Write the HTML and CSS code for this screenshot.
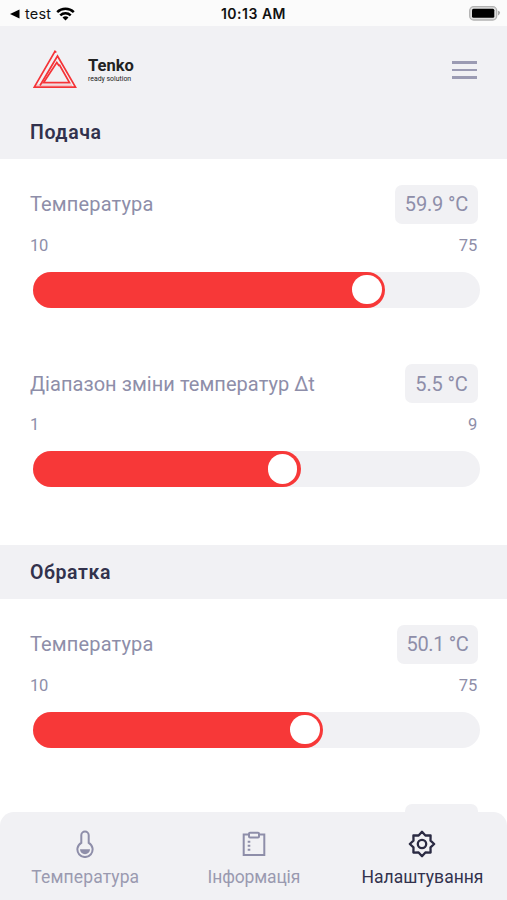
FILE: index.html
```html
<!DOCTYPE html>
<html lang="uk">
<head>
<meta charset="utf-8">
<title>Tenko</title>
<link rel="stylesheet" href="styles.css">
</head>
<body>
<div class="app">
  <div class="status">
    <div class="status-left">
      <svg width="10" height="10" viewBox="0 0 10 10"><path d="M0 5 9.500 .6v8.800z"/></svg>
      <span class="carrier">test</span>
      <svg class="wifi" width="19" height="14" viewBox="0 0 19 14" fill="none" stroke="#000" stroke-width="2.500"><path d="M1.200 5.200a11.800 11.800 0 0 1 16.600 0M4.300 8.300a7.400 7.400 0 0 1 10.400 0"/><path d="M9.500 13.500 6.500 10.500a4.200 4.200 0 0 1 6 0z" fill="#000" stroke="none"/></svg>
    </div>
    <span class="clock">10:13 AM</span>
    <svg class="battery" width="32" height="15" viewBox="0 0 32 15"><rect x=".7" y=".7" width="27" height="13.300" rx="4" fill="#dedede" stroke="#b2b2b2" stroke-width="1.300"/><rect x="3" y="2.800" width="22.300" height="9" rx="1.500"/><path d="M29 4.800q3 1 1.800 2.600-.6 1.400-1.800 2z" fill="#a9a9a9"/></svg>
  </div>
  <header class="header">
    <div class="logo">
      <svg width="46" height="40" viewBox="0 0 46 40" fill="none" stroke="#f53337" stroke-width="1.700"><path d="M24.300 2.500 23 1.300 2.300 37.200h41.200L25.500 6 8 35.500"/><path d="M27.200 16 24.800 12.500 11.500 32.700h26L27.200 14.500"/><path d="M4 35.200h36" stroke-width="1" opacity=".35"/></svg>
      <div class="brand"><span class="brand-name">Tenko</span><span class="brand-sub">ready solution</span></div>
    </div>
    <div class="burger"><i></i><i></i><i></i></div>
  </header>
  <h2 class="title title-first"><span class="t1">Подача</span></h2>
  <section class="panel">
    <div class="setting">
      <div class="row"><span class="label">Температура</span><span class="pill pill-a">59.9 °C</span></div>
      <div class="range"><span>10</span><span>75</span></div>
      <div class="track"><div class="fill" style="width:352px"><b class="knob"></b></div></div>
    </div>
    <div class="setting">
      <div class="row"><span class="label label-long">Діапазон зміни температур Δt</span><span class="pill pill-b">5.5 °C</span></div>
      <div class="range"><span>1</span><span>9</span></div>
      <div class="track"><div class="fill" style="width:267.5px"><b class="knob"></b></div></div>
    </div>
  </section>
  <h2 class="title"><span class="t2">Обратка</span></h2>
  <section class="panel">
    <div class="setting">
      <div class="row"><span class="label">Температура</span><span class="pill pill-c">50.1 °C</span></div>
      <div class="range"><span>10</span><span>75</span></div>
      <div class="track"><div class="fill" style="width:290px"><b class="knob"></b></div></div>
    </div>
    <div class="setting">
      <div class="row"><span></span><span class="pill pill-b"></span></div>
    </div>
  </section>
  <nav class="tabs">
    <div class="tab">
      <svg width="28" height="28" viewBox="0 0 28 28" fill="none" stroke="#8e8ea9" stroke-width="2"><path d="M10.300 12.800V5.200a3.700 3.700 0 0 1 7.400 0v7.600a7.600 7.600 0 1 1-7.400 0z"/><path d="M9 19.200h10a5 5 0 0 1-10 0z" fill="#8e8ea9" stroke="none"/></svg>
      <span class="n1">Температура</span>
    </div>
    <div class="tab">
      <svg width="28" height="28" viewBox="0 0 28 28" fill="none" stroke="#8e8ea9" stroke-width="2"><path d="M9 4.500H3.700v20.600h20.600V4.500H19"/><rect x="9" y="2.800" width="10" height="4.700" rx="1"/><path d="M7.700 11.800h2.600M7.700 15.800h2.600M7.700 19.800h2.600"/></svg>
      <span class="n2">Інформація</span>
    </div>
    <div class="tab active">
      <svg width="28" height="28" viewBox="0 0 28 28" fill="none" stroke="#2a2a42" stroke-width="2.300" stroke-linejoin="round"><path d="M14 1.800 17.400 5.500 22.600 5.400 22.500 10.600 26.200 14 22.500 17.400 22.600 22.600 17.400 22.500 14 26.200 10.600 22.500 5.400 22.600 5.500 17.400 1.800 14 5.500 10.600 5.400 5.400 10.600 5.500z"/><circle cx="14" cy="14" r="4.200"/></svg>
      <span class="n3">Налаштування</span>
    </div>
  </nav>
</div>
</body>
</html>
```
FILE: styles.css
```css
* { box-sizing: border-box; }
body { margin: 0; font-family: Roboto, "Liberation Sans", sans-serif; }
.app { position: relative; width: 507px; height: 900px; overflow: hidden; background: #fff; }
svg { display: block; flex: none; }
.status { display: grid; grid-template-columns: 1fr auto 1fr; align-items: center; height: 26px; padding: 1px 6px 0 10px; background: #fbfbfb; font-family: Inter, sans-serif; color: #111; }
.status-left { display: flex; align-items: center; }
.carrier { font-size: 14.5px; margin: 0 5px; letter-spacing: .2px; }
.clock { font-size: 14px; font-weight: 600; letter-spacing: .5px; margin-right: 4px; }
.battery { justify-self: end; }
.header { display: flex; justify-content: space-between; align-items: center; height: 80px; padding: 8px 30px 0 32px; background: #f1f1f4; }
.logo { display: flex; align-items: center; gap: 10px; }
.brand { display: flex; flex-direction: column; color: #222; white-space: nowrap; }
.brand-name { padding-top: 3px; font-size: 16.500px; line-height: 19px; font-weight: 700; }
.brand-sub { margin-bottom: 4px; font-size: 6.900px; line-height: 8px; }
.burger { display: flex; flex-direction: column; gap: 5.200px; width: 25px; }
.burger i { height: 2.400px; background: #9b9bb3; }
.title { display: flex; align-items: center; margin: 0; height: 54px; padding: 0 30px; background: #f1f1f4; color: #32324d; font-size: 19.500px; font-weight: 600; letter-spacing: .6px; }
.title-first { height: 53px; padding-bottom: 1px; }
.panel { padding-top: 25.500px; height: 386px; }
.setting { height: 179.700px; }
.row { display: flex; justify-content: space-between; align-items: center; height: 39px; padding: 0 29px 0 30px; color: #8e8ea9; font-size: 20px; white-space: nowrap; }
.label { letter-spacing: .15px; }
.label-long { letter-spacing: .05px; }
.pill { display: flex; align-items: center; justify-content: center; height: 39px; border-radius: 7px; background: #f1f1f4; letter-spacing: -.15px; }
.pill-a { width: 83px; }
.pill-b { width: 73px; }
.pill-c { width: 81px; letter-spacing: -.35px; }
.range { display: flex; justify-content: space-between; padding: 0 30px 0 30px; margin-top: 11px; height: 21px; line-height: 21px; font-size: 16.500px; letter-spacing: -.2px; color: #8e8ea9; }
.track { margin: 16px 27px 0 33px; height: 36px; border-radius: 18px; background: #f1f1f4; }
.fill { display: flex; align-items: center; justify-content: flex-end; height: 36px; padding-right: 3.500px; border-radius: 18px; background: #f73838; }
.knob { width: 29.500px; height: 29.500px; border-radius: 50%; background: #fff; }
.tabs { position: absolute; left: 0; right: 0; bottom: 0; display: grid; grid-template-columns: repeat(3, 168.600px); padding-left: 1px; height: 88px; border-radius: 14px 14px 0 0; background: #f1f1f4; }
.tab { display: flex; flex-direction: column; align-items: center; padding-top: 18px; gap: 8px; color: #9a9ab0; font-size: 17.500px; line-height: 22px; white-space: nowrap; }
.n1 { letter-spacing: .12px; }
.n2 { letter-spacing: -.15px; }
.active { color: #32324d; }
```
